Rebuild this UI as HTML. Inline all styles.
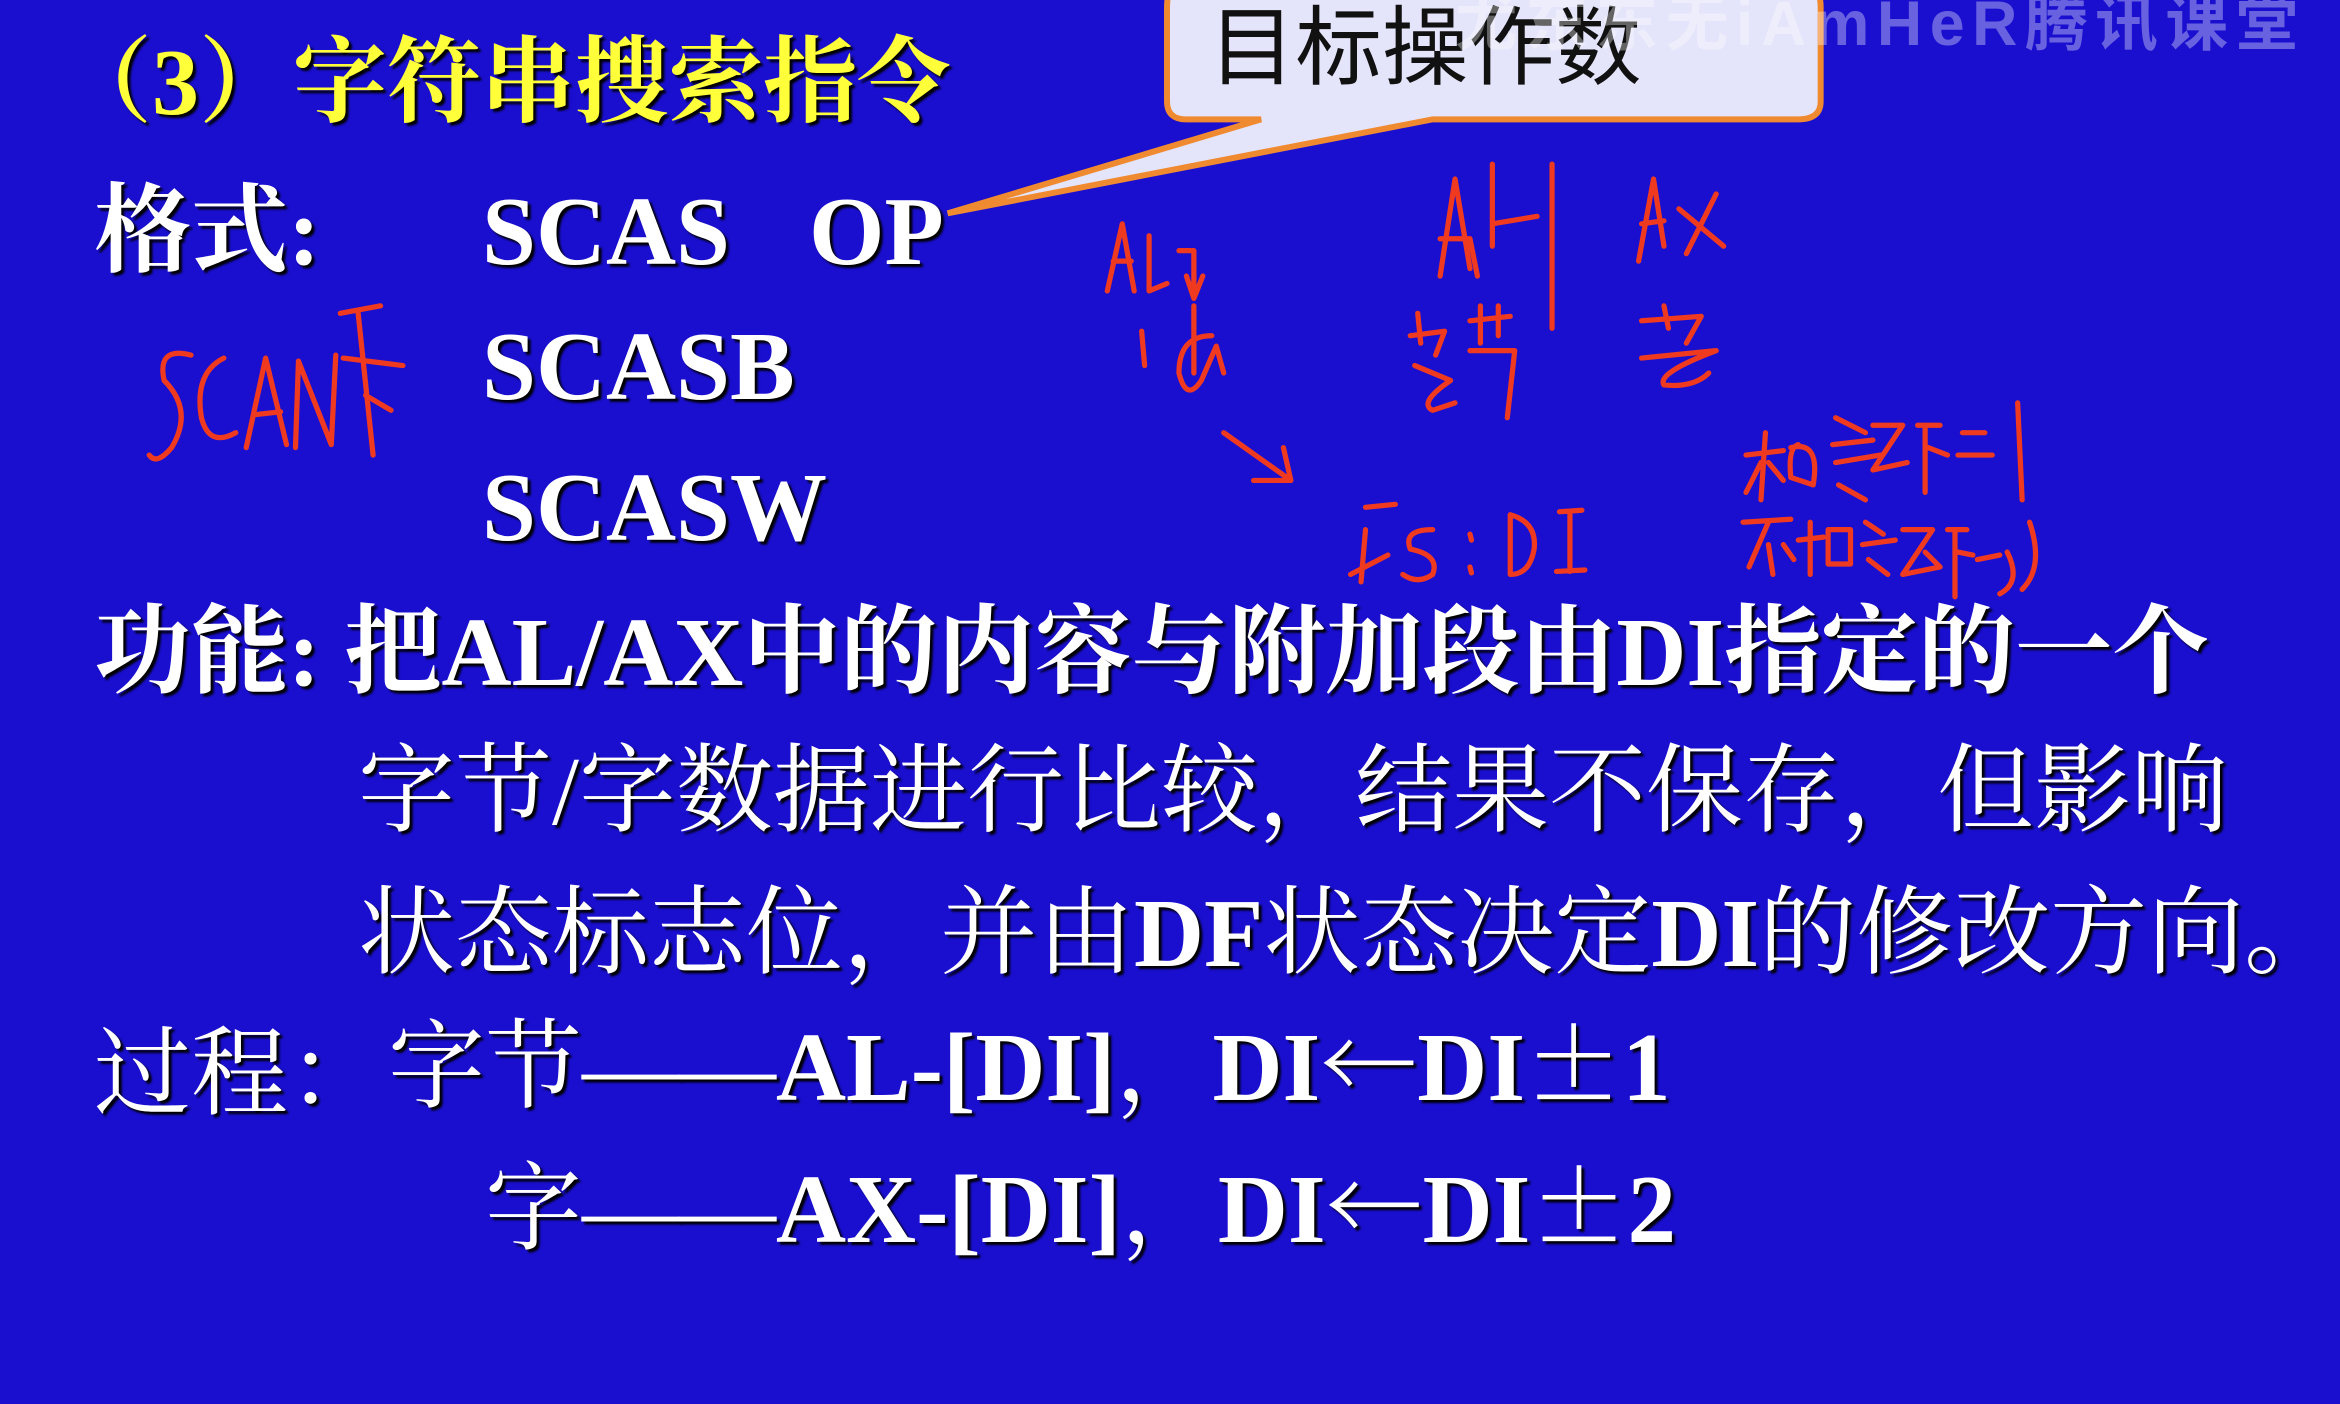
<!DOCTYPE html>
<html><head><meta charset="utf-8"><style>
html,body{margin:0;padding:0}
body{width:2340px;height:1404px;background:#1a0fcf;position:relative;overflow:hidden;font-family:"Liberation Serif","Noto Serif CJK SC",serif;color:#fff}
.t{position:absolute;white-space:nowrap;font-size:97px;line-height:97px;font-weight:bold;text-shadow:3px 3px 2px #000}
.y{color:#ffff3a;font-size:94px;line-height:94px;font-weight:bold}
.lat{font-family:"Liberation Serif",serif;font-weight:bold}
.c{font-family:"Noto Serif CJK SC",serif;font-weight:bold;line-height:0}
svg{position:absolute;left:0;top:0}
</style></head><body>
<div class="t y" style="left:58px;top:36px">（3）字符串搜索指令</div>
<div class="t" style="left:94px;top:183px">格式:</div>
<div class="t lat" style="left:482px;top:183px">SCAS</div>
<div class="t lat" style="left:809px;top:183px">OP</div>
<div class="t lat" style="left:482px;top:318px">SCASB</div>
<div class="t lat" style="left:482px;top:459px">SCASW</div>
<div class="t" style="left:94px;top:604px">功能: 把AL/AX中的内容与附加段由DI指定的一个</div>
<div class="t" style="left:358px;top:743px;font-weight:normal">字节/字数据进行比较，结果不保存，但影响</div>
<div class="t" style="left:358px;top:885px;font-weight:normal">状态标志位，并由<b>DF</b>状态决定<b>DI</b>的修改方向。</div>
<div class="t" style="left:94px;top:1026px;font-weight:normal">过程：</div>
<div class="t" style="left:388px;top:1019px;font-weight:normal">字节——<b>AL-[DI]</b>，<b>DI<span class="c">←</span>DI<span class="c">±</span>1</b></div>
<div class="t" style="left:485px;top:1161px;font-weight:normal">字——<b>AX-[DI]</b>，<b>DI<span class="c">←</span>DI<span class="c">±</span>2</b></div>

<svg width="2340" height="1404" viewBox="0 0 1568 941" preserveAspectRatio="none">
<path d="M790,-10 H1210 Q1220,-10 1220,5 V68 Q1220,80 1205,80 H960 L635,143 L845,80 H795 Q782,80 782,68 V5 Q782,-10 790,-10 Z" fill="#e4e4fa" stroke="#f08a30" stroke-width="4"/>
<text x="810" y="52" font-family="Noto Sans CJK SC, sans-serif" font-size="58" fill="#111">目标操作数</text>
<text x="975" y="30" font-family="Liberation Sans, Noto Sans CJK SC, sans-serif" font-size="42" font-weight="bold" fill="#fff" fill-opacity="0.35" textLength="565">尤东东无iAmHeR腾讯课堂</text>
<g fill="none" stroke="#f03a20" stroke-width="3.5" stroke-linecap="round" stroke-linejoin="round">
<path d="M128,238 Q105,232 110,255 Q130,275 115,300 Q105,312 100,305"/>
<path d="M150,240 Q130,250 135,280 Q140,300 158,290"/>
<path d="M165,300 L178,240 L192,298 M170,278 L188,276"/>
<path d="M198,300 L200,242 L222,298 L225,238"/>
<path d="M228,210 L255,205 M240,210 L250,305 M230,240 L270,245 M245,265 L262,275"/>
<path d="M742,195 L752,150 L760,195 M746,175 L758,175"/>
<path d="M770,158 L770,195 L782,190"/>
<path d="M790,168 L800,168 L800,195 M795,185 L800,200 L806,185"/>
<path d="M800,205 L800,250"/>
<path d="M765,222 L767,245"/>
<path d="M812,225 Q790,225 790,250 Q795,270 805,255 L815,232 L820,250"/>
<path d="M820,290 L865,322 M840,322 L865,322 L860,300"/>
<path d="M965,185 L975,120 L985,180 M965,160 L985,160 L990,185"/>
<path d="M1000,110 L1000,165 M1000,150 L1030,145 M1040,110 L1040,220"/>
<path d="M950,210 L952,230 M945,225 L968,222 L962,238 M948,245 L972,255 Q950,270 960,275 L975,270"/>
<path d="M985,215 L1012,212 M992,205 L992,230 M1004,205 L1004,225 M985,235 L1015,235 L1010,280"/>
<path d="M1098,175 L1108,120 L1115,165 M1100,150 L1115,148"/>
<path d="M1125,140 L1155,165 M1150,130 L1130,170"/>
<path d="M1115,205 L1118,220 M1100,215 L1140,212 L1130,230 M1100,240 L1150,235 Q1110,250 1115,258 Q1135,260 1145,250"/>
<path d="M915,340 L935,338 M915,355 L912,390 M905,385 L930,372"/>
<path d="M960,355 Q940,355 945,368 Q965,372 960,385 Q950,392 940,385"/>
<path d="M985,358 L986,362 M985,380 L986,384"/>
<path d="M1012,345 L1012,385 M1012,345 Q1030,350 1028,368 Q1025,385 1012,385"/>
<path d="M1045,343 L1060,342 M1052,343 L1052,383 M1043,383 L1062,382"/>
<path d="M1170,305 L1195,302 M1183,290 L1180,335 M1180,310 L1170,330 M1185,310 L1195,322"/>
<path d="M1200,300 Q1220,295 1215,325 L1200,320 Q1198,300 1205,298"/>
<path d="M1230,280 L1250,290 M1228,298 L1255,295 M1230,310 L1260,305 M1232,325 L1250,335"/>
<path d="M1255,285 L1275,285 L1255,315 L1278,310"/>
<path d="M1285,285 L1300,285 M1290,285 L1290,330 M1292,300 L1305,305"/>
<path d="M1315,290 L1330,290 M1312,305 L1335,305 M1352,270 L1355,335"/>
<path d="M1168,350 L1200,348 M1185,350 L1172,380 M1185,365 L1188,385 M1195,365 L1202,375"/>
<path d="M1205,362 L1222,360 M1213,350 L1213,385 M1225,355 L1240,355 L1240,378 L1225,378 Z"/>
<path d="M1250,350 L1262,358 M1248,365 L1270,362 M1252,375 L1265,385"/>
<path d="M1275,355 L1295,355 L1275,385 L1300,380 L1290,370"/>
<path d="M1305,355 L1318,355 M1310,355 L1310,400 M1312,370 L1322,372"/>
<path d="M1325,375 L1340,372 M1345,370 Q1355,390 1340,398 M1360,350 Q1370,380 1355,395"/>
</g>
</svg>
</body></html>
